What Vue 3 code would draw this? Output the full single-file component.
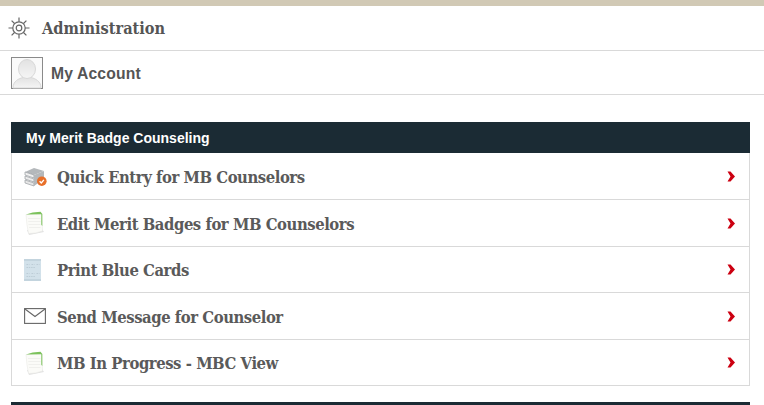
<script setup>
const items = [
  { label: 'Quick Entry for MB Counselors', icon: 'books' },
  { label: 'Edit Merit Badges for MB Counselors', icon: 'note' },
  { label: 'Print Blue Cards', icon: 'card' },
  { label: 'Send Message for Counselor', icon: 'mail' },
  { label: 'MB In Progress - MBC View', icon: 'note' }
]
</script>

<template>
  <div class="page">
    <div class="topbar"></div>

    <a class="nav admin">
      <svg class="gear" width="22" height="22" viewBox="0 0 22 22" fill="none" stroke="#666" stroke-width="1.2">
        <circle cx="11" cy="11" r="6.200" />
        <circle cx="11" cy="11" r="2.800" />
        <path d="M11 0.500V4.800M11 17.200v4.300M0.500 11h4.300M17.200 11h4.300M3.600 3.600l2.900 2.900M15.500 15.500l2.900 2.900M18.400 3.600l-2.900 2.900M6.500 15.500l-2.900 2.900" />
      </svg>
      <span>Administration</span>
    </a>

    <a class="nav account">
      <svg class="avatar" width="32" height="32" viewBox="0 0 32 32">
        <defs>
          <linearGradient id="av" x1="0" y1="0" x2="0" y2="1">
            <stop offset="0" stop-color="#e2e2e2" />
            <stop offset="1" stop-color="#f5f5f5" />
          </linearGradient>
        </defs>
        <rect x="0.500" y="0.500" width="31" height="31" fill="#fafafa" stroke="#8a8a8a" />
        <path d="M2 31c0-7 6-9.500 10-10.500h8c4 1 10 3.500 10 10.500z" fill="url(#av)" stroke="#d8d8d8" />
        <ellipse cx="16" cy="12" rx="8.500" ry="9.500" fill="url(#av)" stroke="#d8d8d8" />
      </svg>
      <span>My Account</span>
    </a>

    <section class="panel">
      <h2 class="panel-head">My Merit Badge Counseling</h2>
      <ul class="list">
        <li v-for="item in items" :key="item.label" class="row">
          <span class="icon">
            <svg v-if="item.icon === 'books'" width="23" height="20" viewBox="0 0 23 20">
              <path d="M1 5l9-4 10 3-10 4z" fill="#b4b8bb" />
              <path d="M1 5l9 3v3L1 8z" fill="#f0f0f0" stroke="#9a9ea2" stroke-width="0.7" />
              <path d="M1 9l9 3v3L1 12z" fill="#ececec" stroke="#9a9ea2" stroke-width="0.7" />
              <path d="M1 13l9 3v3l-9-3z" fill="#e6e6e6" stroke="#9a9ea2" stroke-width="0.7" />
              <path d="M10 8l10-4v8l-10 7z" fill="#b4b8bb" />
              <circle cx="17.800" cy="14.200" r="4.800" fill="#e8702a" />
              <path d="M15.600 14.200l1.700 1.800 2.600-3.200" fill="none" stroke="#fff" stroke-width="1.300" />
            </svg>
            <svg v-else-if="item.icon === 'note'" class="note" width="22" height="24" viewBox="0 0 22 24">
              <path d="M3 19l15-1 2 3-15 3z" fill="#e2e2e2" />
              <path d="M2 3.500l16-1 0.500 17.500q-6 2.500-14 2.500-2-9-2.500-19z" fill="#fbfbf8" stroke="#e6e6e2" stroke-width="0.5" />
              <path d="M4 7.500h12.500M4.200 10.500h12.500M4.500 13.500h12M5 16.500h11.500" stroke="#eeeeea" stroke-width="0.8" />
              <path d="M2 3.500Q8 1 16.500 0.800l1.800 2.200v12l-1-1.200V3.200z" fill="#7cc25c" />
            </svg>
            <svg v-else-if="item.icon === 'card'" width="17" height="22" viewBox="0 0 17 22">
              <rect width="17" height="22" fill="#d2e1ea" />
              <path d="M0 1h17M0 21h17" stroke="#bfcfda" stroke-width="1.500" />
              <path d="M2.500 5.500h3M7.500 5.500h3M12.500 5.500h3M2.500 8.500h9M2.500 14.500h3M7.500 14.500h3M12.500 14.500h3M2.500 17.500h9" stroke="#b9cad4" stroke-width="0.9" stroke-dasharray="1.500 0.800" />
            </svg>
            <svg v-else width="22" height="16" viewBox="0 0 22 16" fill="none" stroke="#666" stroke-width="1.100">
              <rect x="0.600" y="0.600" width="20.800" height="14.800" />
              <path d="M1 1l10 7.500L21 1" />
            </svg>
          </span>
          <span class="label">{{ item.label }}</span>
          <svg class="chev" width="8" height="11" viewBox="0 0 8 11">
            <path d="M0.500 0.500h3L8 5.500 3.500 10.500h-3L3.500 5.500z" fill="#cc0011" />
          </svg>
        </li>
      </ul>
    </section>

    <div class="next-head"></div>
  </div>
</template>

<style>
html, body {
  margin: 0;
  background: #fff;
}
</style>

<style scoped>
.page {
  width: 764px;
  height: 405px;
  overflow: hidden;
  box-sizing: border-box;
  display: flex;
  flex-direction: column;
  font-family: "Liberation Sans", Arial, sans-serif;
}

.topbar {
  height: 6px;
  background: #d1c9b5;
}

.nav {
  display: flex;
  align-items: center;
  border-bottom: 1px solid #d9d9d9;
  color: #555;
  font-weight: bold;
}

.admin {
  height: 44px;
  padding-left: 8px;
  gap: 12px;
  font-family: "DejaVu Serif", serif;
  font-size: 16.200px;
  font-stretch: condensed;
}

.account {
  height: 43px;
  padding-left: 11px;
  gap: 8px;
  font-size: 15.700px;
  letter-spacing: 0.150px;
}

.account span {
  padding-top: 2px;
}

.panel {
  margin: 27px 14px 0 11px;
}

.panel-head {
  margin: 0;
  height: 31px;
  padding-left: 15px;
  line-height: 32px;
  background: #1b2b34;
  color: #fff;
  font-size: 14px;
  font-weight: bold;
}

.list {
  list-style: none;
  margin: 0;
  padding: 0.500px 0 0;
  border: 1px solid #d9d9d9;
  border-top: 0;
}

.row {
  display: flex;
  align-items: center;
  box-sizing: border-box;
  height: 46.500px;
  padding: 1px 14px 0 12px;
  border-bottom: 1px solid #d9d9d9;
}

.row:last-child {
  height: 45.500px;
  border-bottom: 0;
}

.icon {
  width: 33px;
  height: 24px;
  flex: none;
  display: flex;
  align-items: center;
}

.label {
  flex: 1;
  padding-top: 2px;
  color: #5a5a5a;
  font-family: "DejaVu Serif", serif;
  font-size: 16.500px;
  font-weight: bold;
  font-stretch: condensed;
  letter-spacing: -0.450px;
}

.next-head {
  margin: 16px 14px 0 11px;
  height: 3px;
  background: #1b2b34;
}
</style>
